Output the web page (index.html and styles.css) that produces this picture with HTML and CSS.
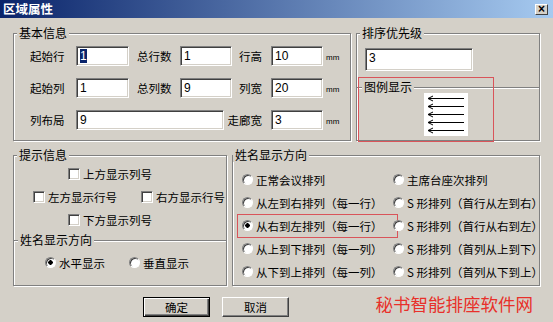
FILE: index.html
```html
<!DOCTYPE html>
<html lang="zh-CN">
<head>
    <meta charset="UTF-8">
    <title>区域属性</title>
    <link rel="stylesheet" href="styles.css">
</head>
<body>
<div class="dialog">
    <div class="titlebar">
        <span class="title">区域属性</span>
        <span class="close">×</span>
    </div>

    <div class="content">
        <div class="row-top">
            <fieldset class="group basic">
                <legend>基本信息</legend>
                <div class="form-grid">
                    <span class="lbl">起始行</span>
                    <span class="edit w53"><span class="sel">1</span></span>
                    <span class="lbl2">总行数</span>
                    <span class="edit w52">1</span>
                    <span class="lbl3">行高</span>
                    <span class="edit w52">10</span>
                    <span class="unit">mm</span>

                    <span class="lbl">起始列</span>
                    <span class="edit w53">1</span>
                    <span class="lbl2">总列数</span>
                    <span class="edit w52">9</span>
                    <span class="lbl3">列宽</span>
                    <span class="edit w52">20</span>
                    <span class="unit">mm</span>

                    <span class="lbl">列布局</span>
                    <span class="edit span3">9</span>
                    <span class="lbl3">走廊宽</span>
                    <span class="edit w52">3</span>
                    <span class="unit">mm</span>
                </div>
            </fieldset>

            <fieldset class="group order">
                <legend>排序优先级</legend>
                <span class="edit prio">3</span>
                <!-- 图例显示 -->
                <div class="mark-wrap">
                    <fieldset class="sub legend-box">
                        <legend>图例显示</legend>
                        <svg class="arrows" width="44" height="43" viewBox="0 0 44 43">
                            <rect width="44" height="43" fill="#fff"/>
                            <g stroke="#000" stroke-width="1" fill="none">
                                <path d="M4 5.5H40M4 5.5L9 3M4 5.5L9 8"/>
                                <path d="M4 13.5H40M4 13.5L9 11M4 13.5L9 16"/>
                                <path d="M4 21.5H40M4 21.5L9 19M4 21.5L9 24"/>
                                <path d="M4 29.5H40M4 29.5L9 27M4 29.5L9 32"/>
                                <path d="M4 37.5H40M4 37.5L9 35M4 37.5L9 40"/>
                            </g>
                        </svg>
                    </fieldset>
                </div>
            </fieldset>
        </div>

        <div class="row-mid">
            <fieldset class="group hints">
                <legend>提示信息</legend>
                <div class="checks">
                    <div class="check-row indent">
                        <label class="opt"><span class="check"></span>上方显示列号</label>
                    </div>
                    <div class="check-row side">
                        <label class="opt"><span class="check"></span>左方显示行号</label>
                        <label class="opt"><span class="check"></span>右方显示行号</label>
                    </div>
                    <div class="check-row indent">
                        <label class="opt"><span class="check"></span>下方显示列号</label>
                    </div>
                </div>
                <fieldset class="sub dir-box">
                    <legend>姓名显示方向</legend>
                    <div class="dir-row">
                        <label class="opt"><span class="radio on"></span>水平显示</label>
                        <label class="opt"><span class="radio"></span>垂直显示</label>
                    </div>
                </fieldset>
            </fieldset>

            <fieldset class="group names">
                <legend>姓名显示方向</legend>
                <div class="name-grid">
                    <label class="opt"><span class="radio"></span>正常会议排列</label>
                    <label class="opt"><span class="radio"></span>主席台座次排列</label>
                    <label class="opt"><span class="radio"></span>从左到右排列（每一行）</label>
                    <label class="opt"><span class="radio"></span>S 形排列（首行从左到右）</label>
                    <label class="opt marked"><span class="radio on"></span>从右到左排列（每一行）</label>
                    <label class="opt"><span class="radio"></span>S 形排列（首行从右到左）</label>
                    <label class="opt"><span class="radio"></span>从上到下排列（每一列）</label>
                    <label class="opt"><span class="radio"></span>S 形排列（首列从上到下）</label>
                    <label class="opt"><span class="radio"></span>从下到上排列（每一列）</label>
                    <label class="opt"><span class="radio"></span>S 形排列（首列从下到上）</label>
                </div>
            </fieldset>
        </div>

        <div class="row-btn">
            <button class="btn default">确定</button>
            <button class="btn">取消</button>
            <span class="brand">秘书智能排座软件网</span>
        </div>
    </div>
</div>
</body>
</html>
```

FILE: styles.css
```css
body { margin: 0; background: #d4d0c8; font-family: "Noto Sans CJK SC", "Liberation Sans", sans-serif; font-size: 11.5px; color: #000; }
.dialog { width: 553px; height: 322px; overflow: hidden; }

/* barra de título */
.titlebar {
    height: 18px;
    display: flex;
    align-items: center;
    justify-content: space-between;
    padding: 0 5px 0 3px;
    box-sizing: border-box;
    background: linear-gradient(to right, #0a246a, #a6caf0);
}
.title { color: #fff; font-weight: bold; font-size: 12.5px; line-height: 14px; }
.close {
    width: 13px;
    height: 11px;
    box-sizing: border-box;
    display: flex;
    align-items: center;
    justify-content: center;
    background: #d4d0c8;
    border: 1px solid;
    border-color: #fff #404040 #404040 #fff;
    font: bold 12px/9px "Liberation Sans", sans-serif;
}

.content { padding-left: 13px; }

/* group boxes */
.group {
    margin: 0;
    padding: 0;
    min-width: 0;
    box-sizing: border-box;
    border: 1px solid #808080;
    box-shadow: inset 1px 1px #fff, 1px 1px #fff;
}
.group legend, .sub legend {
    padding: 0 2px;
    margin-left: 3px;
    font-size: 12px;
    line-height: 14px;
    background: #d4d0c8;
}
.sub {
    margin: 0;
    padding: 0;
    min-width: 0;
    border: none;
    border-top: 1px solid #808080;
    box-shadow: inset 0 1px #fff;
}

.row-top { display: flex; gap: 5px; margin-top: 8px; }
.basic { width: 338px; }
.order { width: 184px; }

.form-grid {
    display: grid;
    grid-template-columns: 46px 53px 51px 52px 39px 52px auto;
    grid-auto-rows: 20px;
    row-gap: 12px;
    align-items: center;
    margin: 6px 0 10px 16px;
}
.lbl2 { padding-left: 8px; }
.lbl3 { display: flex; justify-content: flex-end; white-space: nowrap; padding-right: 9px; }
.unit { font: 8px "Liberation Sans", sans-serif; padding: 3px 0 0 3px; }

.edit {
    display: block;
    height: 20px;
    box-sizing: border-box;
    background: #fff;
    border: 1px solid;
    border-color: #808080 #fff #fff #808080;
    box-shadow: inset 1px 1px #404040, inset -1px -1px #d4d0c8;
    padding: 1px 3px;
    font: 12px/16px "Liberation Sans", sans-serif;
}
.w53 { width: 53px; }
.w52 { width: 52px; }
.span3 { grid-column: span 3; width: 148px; }
.sel { background: #0a246a; color: #fff; }
.prio { width: 108px; height: 23px; margin: 8px 0 0 8px; }

.mark-wrap { position: relative; margin-top: 9px; }
.mark-wrap::after {
    content: "";
    position: absolute;
    top: -3px;
    left: 1px;
    width: 136px;
    height: 65px;
    box-sizing: border-box;
    border: 1px solid #d9545a;
}
.legend-box legend { margin-left: 5px; }
.arrows { display: block; margin: -1px 0 0 67px; }

/* fila central */
.row-mid { display: flex; gap: 5px; margin-top: 7px; }
.hints { width: 214px; }
.names { width: 308px; }

.checks { display: flex; flex-direction: column; }
.check-row { height: 23px; display: flex; align-items: center; }
.check-row.indent { padding-left: 54px; }
.check-row.side { padding-left: 19px; gap: 24px; }

.opt { display: inline-flex; align-items: center; gap: 3px; white-space: nowrap; line-height: 14px; }
.check {
    width: 12px;
    height: 12px;
    box-sizing: border-box;
    background: #fff;
    border: 1px solid;
    border-color: #808080 #fff #fff #808080;
    box-shadow: inset 1px 1px #404040, inset -1px -1px #d4d0c8;
}
.radio {
    width: 11px;
    height: 11px;
    box-sizing: border-box;
    border-radius: 50%;
    background: #fff;
    border: 1px solid;
    border-color: #808080 #fff #fff #808080;
    box-shadow: inset 1px 1px #404040;
}
.radio.on { background: radial-gradient(circle, #000 0 2px, #fff 2.5px); }

.dir-box { margin-top: 2px; }
.dir-box legend { margin-left: 4px; }
.dir-row { height: 23px; display: flex; align-items: center; gap: 24px; padding: 4px 0 11px 31px; }

.names legend { margin-left: 0; }
.name-grid {
    display: grid;
    grid-template-columns: 151px auto;
    grid-auto-rows: 23px;
    align-items: center;
    margin: 6px 0 0 9px;
}
.marked { outline: 1px solid #d9545a; outline-offset: 4px; }

/* botones */
.row-btn { display: flex; align-items: flex-start; margin-top: 11px; padding-left: 130px; gap: 12px; }
.btn {
    width: 67px;
    height: 20px;
    padding: 0;
    box-sizing: border-box;
    background: #d4d0c8;
    border: 1px solid;
    border-color: #fff #404040 #404040 #fff;
    box-shadow: inset -1px -1px #808080;
    font: inherit;
    color: #000;
}
.btn.default {
    border: 1px solid #000;
    box-shadow: inset 1px 1px #fff, inset -1px -1px #404040, inset -2px -2px #808080;
}
.brand {
    margin: -2px 20px 0 auto;
    color: #e8302a;
    font-size: 17.5px;
    line-height: 18px;
}
```
